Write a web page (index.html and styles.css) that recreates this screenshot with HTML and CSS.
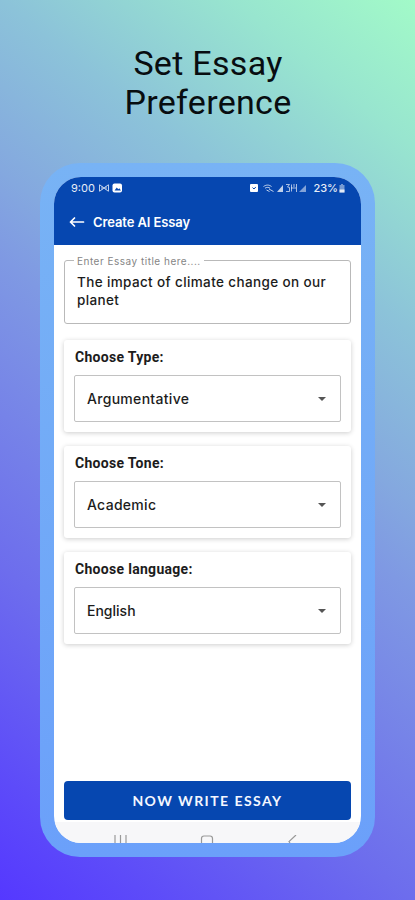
FILE: index.html
```html
<!DOCTYPE html>
<html lang="en">
<head>
<meta charset="utf-8">
<title>Set Essay Preference</title>
<link rel="stylesheet" href="styles.css">
</head>
<body>
<main class="page">
  <h1 class="headline">Set Essay<br>Preference</h1>
  <div class="phone">
    <div class="screen">
      <header class="top">
        <div class="status">
          <span class="time">9:00</span>
          <svg class="left-icons" width="25" height="10" viewBox="0 0 25 10" fill="none" stroke="#fff">
            <path d="M1.500 1.500v7M2 2l8 6M10.500 1.500v7M2 8l8-6M4 3.500v3M8 3.500v3" opacity=".75"/>
            <rect x="14.500" y=".5" width="9.500" height="9" rx="2" fill="#fff" stroke="none"/>
            <path d="M16.500 7.500l2.300-3 1.500 1.700 1-1 1.700 2.300z" fill="#0647b0" stroke="none"/>
          </svg>
          <svg class="right-icons" width="61" height="10" viewBox="0 0 61 10" fill="none" stroke="#fff">
            <rect x="1" y="1" width="8" height="8" rx="1" fill="#fff" stroke="none"/>
            <path d="M3.500 4.500l1.500 1.500 1.800-2" stroke="#0647b0" stroke-width="1"/>
            <path d="M14.500 3.500c3-2 5.500-1.800 8 0M16 5.200c2-1.200 3.500-1 5 0M17.500 7l3 1.500M20 6l4.500 2.500" opacity=".75"/>
            <path d="M34 2v7h-6z" fill="#fff" stroke="none" opacity=".75"/>
            <path d="M37 1.500h3.500l-2 2.500 2 .5v4H37M42.500 1.500v7M42 5h5M45 1v3M47.500 1v8" opacity=".65"/>
            <path d="M57 2v7h-7z" fill="#fff" stroke="none" opacity=".5"/>
          </svg>
          <span class="percent">23%</span>
          <svg class="battery" width="6" height="10" viewBox="0 0 6 10">
            <path d="M2 1h2v1h1.500v7.500H.5V2H2z" fill="#fff" opacity=".45"/>
            <path d="M.5 6.500h5v3h-5z" fill="#fff" opacity=".8"/>
          </svg>
        </div>
        <div class="bar">
          <svg width="16" height="12" viewBox="0 0 16 12" fill="none" stroke="#fff" stroke-width="1.700" stroke-linecap="round" stroke-linejoin="round"><path d="M1.500 6H14.500M5.500 2L1.500 6l4 4"/></svg>
          <span class="bar-title">Create AI Essay</span>
        </div>
      </header>
      <section class="content">
        <fieldset class="field">
          <legend>Enter Essay title here....</legend>
          <p class="value">The impact of climate change on our<br>planet</p>
        </fieldset>
        <div class="card">
          <h2>Choose Type:</h2>
          <div class="select"><span>Argumentative</span><svg width="8" height="4" viewBox="0 0 8 4"><path d="M0 0h8L4 4z" fill="#555"/></svg></div>
        </div>
        <div class="card">
          <h2>Choose Tone:</h2>
          <div class="select"><span>Academic</span><svg width="8" height="4" viewBox="0 0 8 4"><path d="M0 0h8L4 4z" fill="#555"/></svg></div>
        </div>
        <div class="card">
          <h2>Choose language:</h2>
          <div class="select english"><span>English</span><svg width="8" height="4" viewBox="0 0 8 4"><path d="M0 0h8L4 4z" fill="#555"/></svg></div>
        </div>
        <button class="write" type="button">NOW WRITE ESSAY</button>
      </section>
      <footer class="nav">
        <svg width="307" height="8" viewBox="0 0 307 8" fill="none" stroke="#999" stroke-width="1.200">
          <path d="M61 0v8M66.500 0v8M72 0v8"/>
          <path d="M147.500 8V3.500q0-2.500 2.500-2.500h6q2.500 0 2.500 2.500V8"/>
          <path d="M242 0l-7 6.500 1 1.500"/>
        </svg>
      </footer>
    </div>
  </div>
</main>
</body>
</html>
```
FILE: styles.css
```css
* { box-sizing: border-box; }
body { margin: 0; font-family: Inter, "Liberation Sans", sans-serif; color: #1c1c1c; }
.page {
  width: 415px; height: 900px; overflow: hidden;
  display: flex; flex-direction: column; align-items: center;
  background: linear-gradient(219deg, #a2fac8 0%, #98e5cf 12%, #8cc3d9 27%, #84a8df 41%, #7f99e3 48%, #6d6ded 73%, #5d4bf9 90%, #5538ff 100%);
}
.headline {
  margin: 0; padding: 44px 0 0 1px; height: 163px; width: 100%;
  text-align: center; white-space: nowrap; color: #080d10;
  font: 400 34px/39px Roboto, sans-serif; letter-spacing: .3px;
}
.phone {
  width: 335px; height: 694px; padding: 14px; border-radius: 40px;
  background: linear-gradient(#78b3f5, #6ba0fa);
}
.screen {
  width: 307px; height: 666px; border-radius: 27px; overflow: hidden;
  background: #fff; display: flex; flex-direction: column;
}
.top { height: 68px; background: #0647b0; color: #fff; flex: none; }
.status { height: 22px; display: flex; align-items: center; padding: 0 16px 0 17px; font-size: 11px; white-space: nowrap; }
.time { opacity: .9; }
.left-icons { margin-left: 3px; }
.right-icons { margin-left: auto; }
.percent { margin-left: 3px; margin-right: 1px; font-weight: 500; opacity: .9; }
.bar { height: 46px; display: flex; align-items: center; padding: 0 0 0 15px; gap: 8px; }
.bar-title { font-size: 13px; font-weight: 600; letter-spacing: -.1px; white-space: nowrap; }
.content { height: 577px; flex: none; padding: 9px 10px 0; display: flex; flex-direction: column; }
.field {
  margin: 0 0 16px; padding: 0 12px; height: 70px; min-width: 0;
  border: 1px solid #b9b9b9; border-radius: 3px;
}
legend { margin-left: -3px; padding: 0 3px; height: 12px; font: 10px/14px Inter, sans-serif; letter-spacing: .5px; color: #858585; white-space: nowrap; }
.value { margin: 7px 0 0; font-size: 13.500px; line-height: 18px; font-weight: 500; letter-spacing: .37px; white-space: nowrap; }
.card {
  height: 92px; margin-bottom: 14px; padding: 9px 10px 0; border-radius: 3px; background: #fff;
  box-shadow: 0 1px 5px rgba(0,0,0,.2);
}
h2 { margin: 0; padding-left: 1px; height: 26px; font: 700 14px/16px Roboto, sans-serif; letter-spacing: .3px; white-space: nowrap; }
.select {
  height: 47px; border: 1px solid #c2c2c2; border-radius: 2px; padding: 0 14px 0 12px;
  display: flex; align-items: center; justify-content: space-between; font-size: 14px; font-weight: 500; letter-spacing: .3px;
}
.english { letter-spacing: 0; }
.write {
  margin: auto 0 2px; height: 39px; padding: 0; border: 0; border-radius: 4px;
  background: #0647b0; color: #f4f7ff; font: 700 14px/39px Lato, sans-serif; letter-spacing: 1.450px;
}
.nav { flex: 1; background: #f7f7f9; display: flex; align-items: flex-end; }
```
